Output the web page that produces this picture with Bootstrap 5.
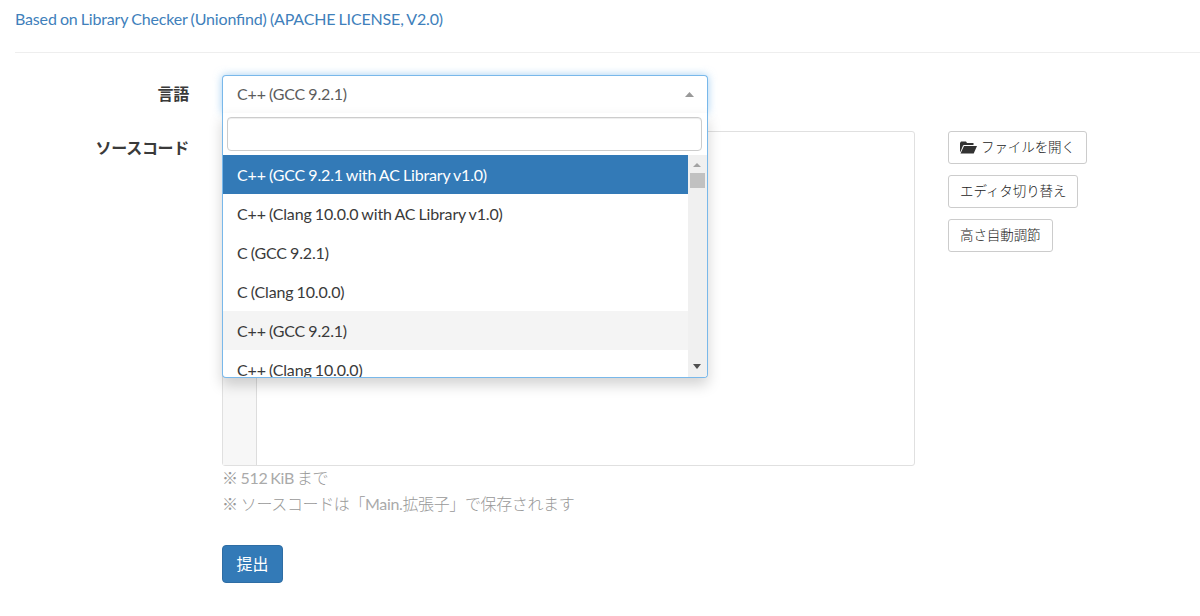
<!DOCTYPE html>
<html lang="ja">
<head>
    <meta charset="UTF-8">
    <meta name="viewport" content="width=device-width, initial-scale=1.0">
    <title>提出</title>

    <link href="https://cdn.jsdelivr.net/npm/bootstrap@5.3.0/dist/css/bootstrap.min.css" rel="stylesheet">
    <script src="https://cdn.jsdelivr.net/npm/bootstrap@5.3.0/dist/js/bootstrap.bundle.min.js"></script>
    <style>
        body {
            font-family: Lato, "Noto Sans CJK JP", sans-serif;
            font-size: 16px;
            line-height: 26px;
            letter-spacing: -.16px;
            word-spacing: -.75px;
            font-feature-settings: "liga" 1;
            color: #3a3a3a;
            overflow: hidden;
        }
        .page {
            padding: 6px 0 0 15px;
        }
        .source-link {
            color: #4080bb;
        }
        .divider {
            margin: 20px 0 22px;
            border-top: 1px solid #eee;
        }
        .form-label-col {
            width: 174px;
            margin-right: 33px;
            padding-top: 4px;
            text-align: right;
            font-weight: 700;
            letter-spacing: -.3px;
        }
        .lang-label {
            padding-top: 6px;
        }
        .lang-box {
            width: 486px;
            height: 38px;
            margin-bottom: 18px;
        }
        .lang-select {
            height: 38px;
            padding: 0 13px 1px 14px;
            border: 1px solid #79b8ea;
            border-bottom: 0;
            border-radius: 4px 4px 0 0;
            background: #fff;
            color: #5c5c5c;
            box-shadow: 0 0 9px rgba(102, 175, 233, .6);
        }
        .lang-menu {
            position: absolute;
            top: 38px;
            left: 0;
            z-index: 10;
            width: 486px;
            height: 265px;
            padding-top: 4px;
            border: 1px solid #79b8ea;
            border-top: 0;
            border-radius: 0 0 4px 4px;
            background: #fff;
            box-shadow: 0 7px 14px rgba(0, 0, 0, .175);
        }
        .lang-search {
            display: block;
            width: 475px;
            height: 34px;
            margin: 0 4px 4px;
            border: 1px solid #ccc;
            border-radius: 4px;
            outline: 0;
            box-shadow: inset 0 1px 1px rgba(0, 0, 0, .075);
        }
        .lang-list {
            height: 222px;
            overflow: hidden;
            border-radius: 0 0 3px 3px;
        }
        .lang-item {
            height: 39.1px;
            padding-left: 14px;
            line-height: 39px;
        }
        .lang-item.highlighted {
            background: #337ab7;
            color: #fff;
        }
        .lang-item.chosen {
            background: #f4f4f4;
        }
        .scroll-track {
            width: 19px;
            padding: 8px 1px 8px 0;
            background: #f0f0f0;
        }
        .scroll-thumb {
            width: 15px;
            height: 15px;
            margin-top: 6px;
            background: #c1c1c1;
        }
        .editor {
            width: 693px;
            height: 335px;
            border: 1px solid #e0e0e0;
            border-radius: 3px;
        }
        .editor-gutter {
            width: 34px;
            border-right: 1px solid #ddd;
            background: #f7f7f7;
        }
        .side-buttons {
            margin-left: 33px;
            gap: 11px;
        }
        .btn-tool {
            height: 33px;
            padding: 0 11px;
            border: 1px solid #ccc;
            border-radius: 3px;
            background: #fff;
            color: #222;
            font-size: 13.5px;
            font-weight: 300;
            letter-spacing: -.08px;
            line-height: 31px;
        }
        .notes {
            margin-top: -1px;
            color: #aaa;
            letter-spacing: -.37px;
        }
        .notes .jp {
            font-weight: 300;
            color: #999;
        }
        .btn-submit {
            width: 61px;
            height: 38px;
            margin-top: 28px;
            padding: 0;
            border: 1px solid #2e6da4;
            border-radius: 4px;
            background: #337ab7;
            color: #fff;
            font-size: 16px;
        }
    </style>
</head>

<body>
    <div class="page">
        <a href="#" class="source-link text-decoration-none">Based on Library Checker (Unionfind) (APACHE LICENSE, V2.0)</a>
        <div class="divider"></div>

        <!-- 言語 -->
        <div class="d-flex">
            <div class="form-label-col lang-label">言語</div>
            <div class="lang-box position-relative">
                <div class="lang-select d-flex align-items-center justify-content-between">
                    <span>C++ (GCC 9.2.1)</span>
                    <svg width="9" height="5"><path d="M0 5L4.5 0L9 5Z" fill="#999"/></svg>
                </div>
                <div class="lang-menu">
                    <input type="text" class="lang-search">
                    <div class="lang-list d-flex">
                        <div class="flex-grow-1">
                            <div class="lang-item highlighted">C++ (GCC 9.2.1 with AC Library v1.0)</div>
                            <div class="lang-item">C++ (Clang 10.0.0 with AC Library v1.0)</div>
                            <div class="lang-item">C (GCC 9.2.1)</div>
                            <div class="lang-item">C (Clang 10.0.0)</div>
                            <div class="lang-item chosen">C++ (GCC 9.2.1)</div>
                            <div class="lang-item">C++ (Clang 10.0.0)</div>
                        </div>
                        <div class="scroll-track d-flex flex-column align-items-center">
                            <svg width="8" height="4"><path d="M0 4L4 0L8 4Z" fill="#a3a3a3"/></svg>
                            <div class="scroll-thumb"></div>
                            <svg class="mt-auto" width="8" height="5"><path d="M0 0L4 5L8 0Z" fill="#505050"/></svg>
                        </div>
                    </div>
                </div>
            </div>
        </div>

        <!-- ソースコード -->
        <div class="d-flex">
            <div class="form-label-col">ソースコード</div>
            <div>
                <div class="editor d-flex">
                    <div class="editor-gutter"></div>
                </div>
                <div class="notes">
                    <div><span class="jp">※</span> 512 KiB <span class="jp">まで</span></div>
                    <div><span class="jp">※ ソースコードは「</span>Main.<span class="jp">拡張子」で保存されます</span></div>
                </div>
                <button type="submit" class="btn btn-submit">提出</button>
            </div>
            <div class="side-buttons d-flex flex-column align-items-start">
                <button type="button" class="btn btn-tool d-flex align-items-center">
                    <svg class="me-1" width="17" height="13" viewBox="0 0 17 13"><path d="M0 11V2L1 0.5H6L7 2H13.5V4H4L3 4.5L0.6 10.5ZM4 5H17L13.7 12.5H0.5Z" fill="#333"/></svg>
                    <span>ファイルを開く</span>
                </button>
                <button type="button" class="btn btn-tool">エディタ切り替え</button>
                <button type="button" class="btn btn-tool">高さ自動調節</button>
            </div>
        </div>
    </div>
</body>
</html>
